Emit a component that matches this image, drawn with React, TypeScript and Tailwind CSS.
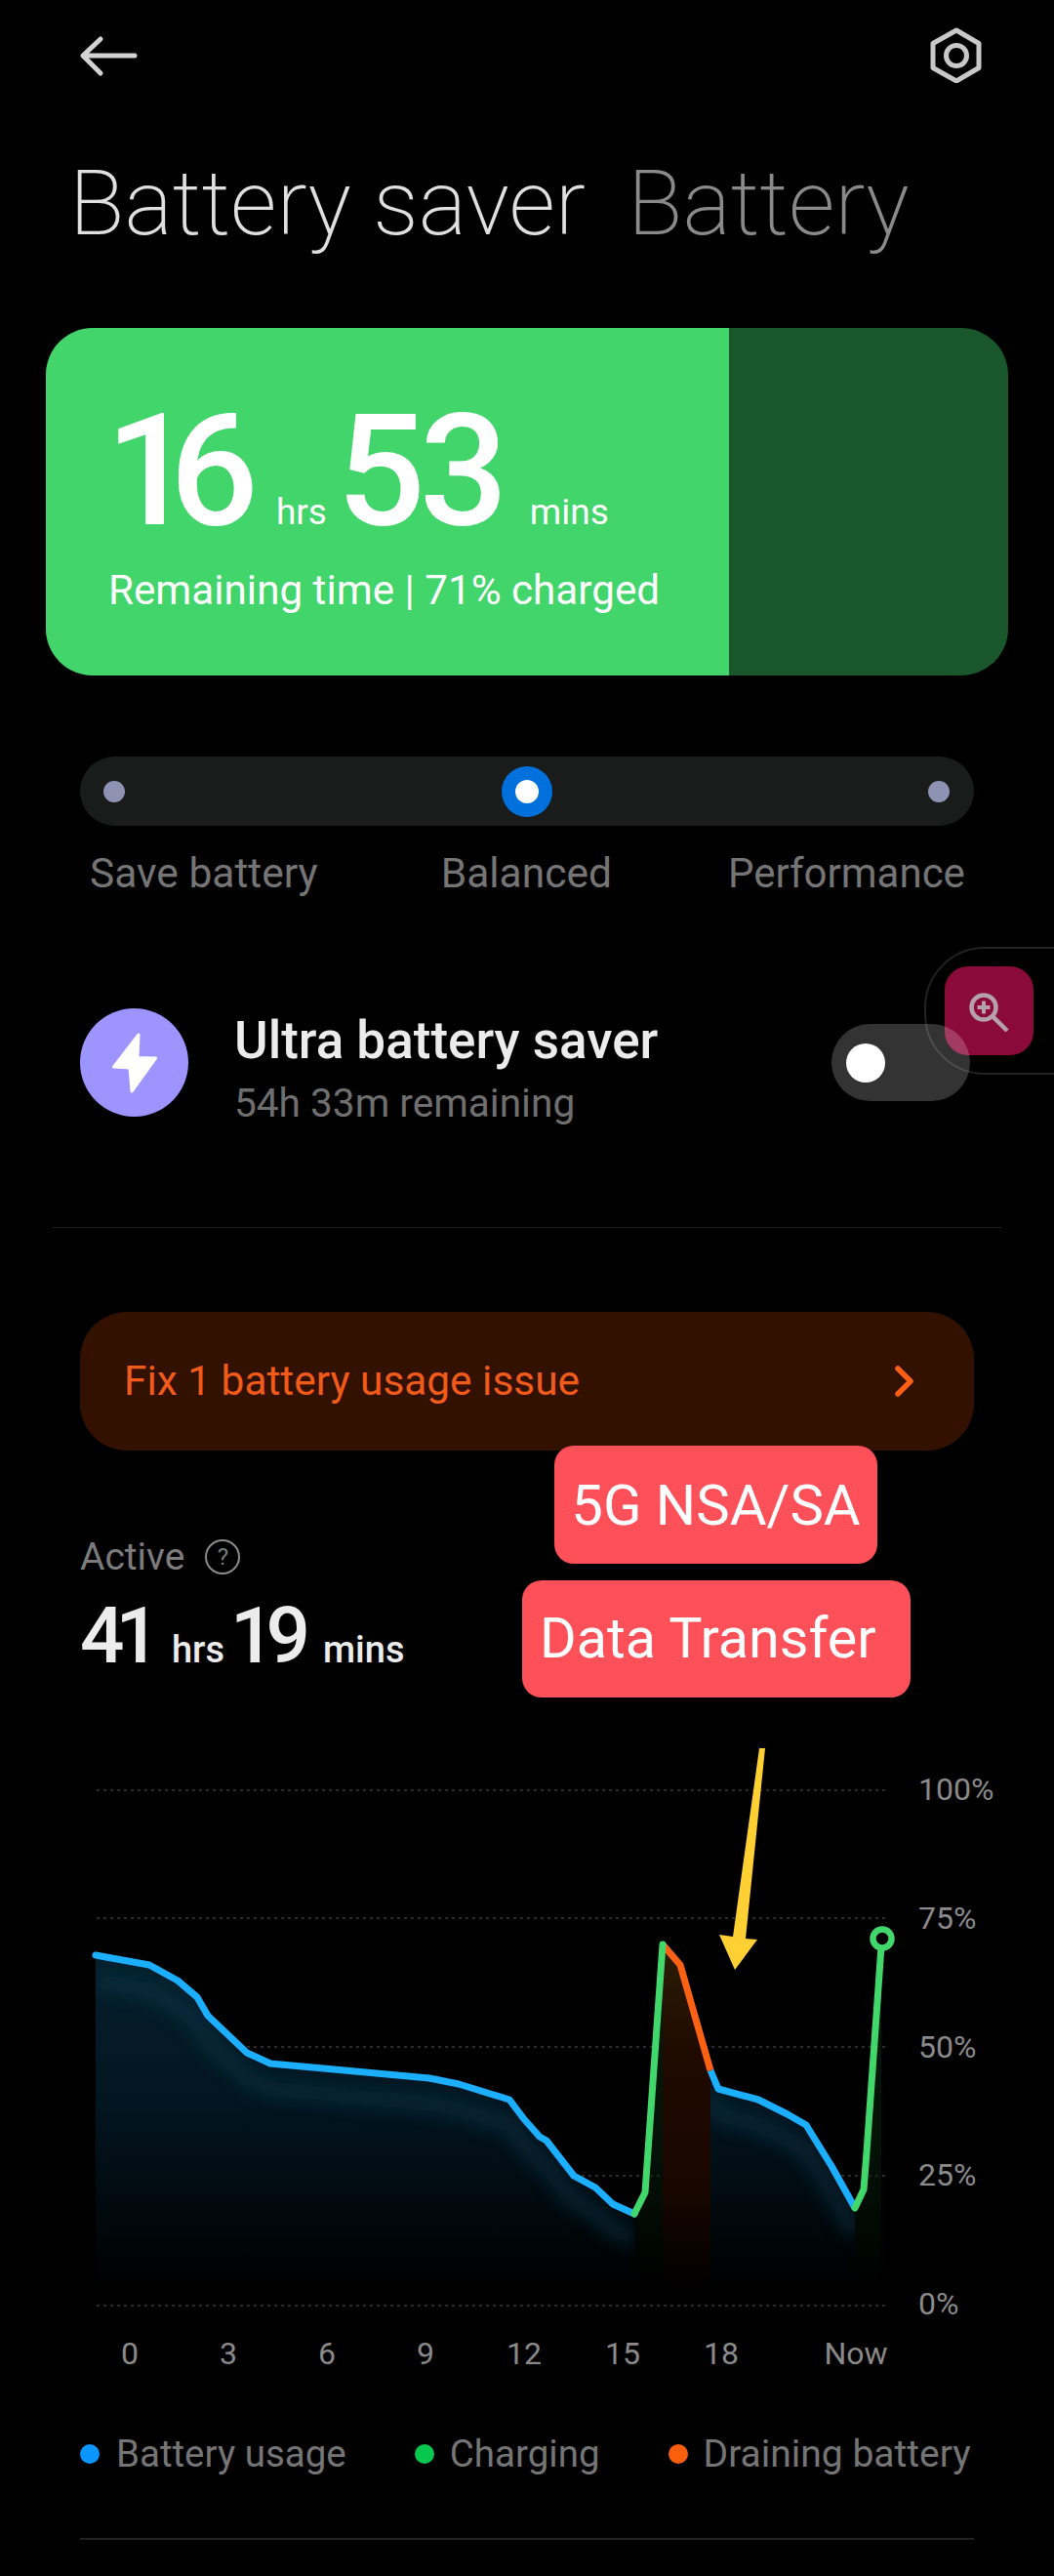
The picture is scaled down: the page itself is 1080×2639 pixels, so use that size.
const blueA = "98,2003 153,2013 182,2029 202,2046 213,2065 233,2084 253,2103 277,2114 440,2129 470,2135 522,2151 537,2171 553,2189 560,2193 588,2229 610,2241 628,2258 650,2268";
const greenA = "650,2268 661,2246 679,1992";
const orange = "679,1992 697,2013 728,2121";
const blueB = "728,2121 736,2140 777,2151 807,2166 826,2177 852,2219 876,2262";
const greenB = "876,2262 885,2243 888,2205 903,1994";

const gridLines = [1834, 1965, 2097, 2229, 2362];
const yLabels = ["100%", "75%", "50%", "25%", "0%"];
const xLabels = ["0", "3", "6", "9", "12", "15", "18"];

function BatteryChart() {
  return (
    <svg width="835" height="590" viewBox="90 1785 835 590" className="shrink-0">
      <defs>
        <linearGradient id="blueFill" gradientUnits="userSpaceOnUse" x1="0" y1="2000" x2="0" y2="2345">
          <stop offset="0" stopColor="#05212e" />
          <stop offset="0.45" stopColor="#031520" />
          <stop offset="1" stopColor="#000000" />
        </linearGradient>
        <linearGradient id="redFill" gradientUnits="userSpaceOnUse" x1="0" y1="2000" x2="0" y2="2345">
          <stop offset="0" stopColor="#2a1c06" />
          <stop offset="0.3" stopColor="#200a00" />
          <stop offset="0.7" stopColor="#180700" />
          <stop offset="1" stopColor="#000000" />
        </linearGradient>
        <linearGradient id="greenFill" gradientUnits="userSpaceOnUse" x1="0" y1="2000" x2="0" y2="2345">
          <stop offset="0" stopColor="#0d3a1a" />
          <stop offset="0.6" stopColor="#08220f" />
          <stop offset="1" stopColor="#000000" />
        </linearGradient>
        <clipPath id="blueClip">
          <polygon points={`${blueA} 650,2345 98,2345`} />
          <polygon points={`${blueB} 876,2345 728,2345`} />
        </clipPath>
        <filter id="glow" x="-10%" y="-50%" width="120%" height="200%">
          <feGaussianBlur stdDeviation="9" />
        </filter>
      </defs>

      {gridLines.map((y) => (
        <line key={y} x1="99" x2="910" y1={y} y2={y} stroke="#3a3a3a" strokeWidth="1.5" strokeDasharray="3 4" />
      ))}

      <polygon points={`${blueA} 650,2345 98,2345`} fill="url(#blueFill)" />
      <polygon points={`${blueB} 876,2345 728,2345`} fill="url(#blueFill)" />
      <polygon points={`${greenA} 679,2345 650,2345`} fill="url(#greenFill)" opacity="0.5" />
      <polygon points={`${orange} 728,2345 679,2345`} fill="url(#redFill)" />
      <polygon points={`${greenB} 903,2345 876,2345`} fill="url(#greenFill)" opacity="0.5" />

      <g clipPath="url(#blueClip)">
        <polyline points={blueA} transform="translate(0 26)" fill="none" stroke="#0a3a50" strokeWidth="16" filter="url(#glow)" opacity="0.55" />
        <polyline points={blueB} transform="translate(0 26)" fill="none" stroke="#0a3a50" strokeWidth="16" filter="url(#glow)" opacity="0.55" />
      </g>

      <polyline points={blueA} fill="none" stroke="#1caeff" strokeWidth="7" strokeLinejoin="round" strokeLinecap="round" />
      <polyline points={blueB} fill="none" stroke="#1caeff" strokeWidth="7" strokeLinejoin="round" />
      <polyline points={orange} fill="none" stroke="#fb6114" strokeWidth="7" strokeLinejoin="round" />
      <polyline points={greenA} fill="none" stroke="#41d76b" strokeWidth="7" strokeLinejoin="round" strokeLinecap="round" />
      <polyline points={greenB} fill="none" stroke="#41d76b" strokeWidth="7" strokeLinejoin="round" strokeLinecap="round" />
      <circle cx="904" cy="1986" r="9.5" fill="#000000" stroke="#41d76b" strokeWidth="6.5" />

      <polygon points="778,1791 784,1791 764,1986 776,1987 753,2018 737,1982 751,1984" fill="#ffd033" />
    </svg>
  );
}

export default function App() {
  return (
    <div className="relative h-[2639px] w-[1080px] overflow-hidden bg-black font-['Roboto',sans-serif]">
      {/* header */}
      <div className="flex items-start justify-between pl-[80px] pr-[72px] pt-[28px]">
        <svg width="64" height="57" viewBox="80 28 64 57" fill="none" stroke="#d2d2d2" strokeWidth="5" strokeLinecap="round" strokeLinejoin="round">
          <path d="M138 57H85M103 40 85 57l18 18" />
        </svg>
        <svg width="56" height="57" viewBox="951 28 56 57" fill="none" stroke="#c8c8c8" strokeWidth="5" strokeLinejoin="round">
          <path d="M979 31 1002 44.5V69.5L979 83 955 69.5V44.5Z" />
          <circle cx="979" cy="57" r="10.5" />
        </svg>
      </div>

      <div className="ml-[71px] mt-[74px] flex h-[100px] text-[93px] font-extralight leading-[100px]">
        <span className="text-[#e0e0e0]">Battery saver</span>
        <span className="ml-[43px] text-[#8a8a8a]">Battery</span>
      </div>

      {/* remaining time card */}
      <div className="mx-[47px] mt-[77px] flex h-[356px] overflow-hidden rounded-[48px] bg-[#1a582c]">
        <div className="h-full w-[700px] bg-[#41d56b] pl-[64px] pt-[67px] text-white">
          <div className="-ml-[3px] flex items-baseline">
            <span className="text-[160px] font-medium leading-[160px] tracking-[-25px]">16</span>
            <span className="ml-[43px] text-[37px] leading-[40px]">hrs</span>
            <span className="ml-[10px] text-[160px] font-medium leading-[160px] tracking-[-6px]">53</span>
            <span className="ml-[28px] text-[37px] leading-[40px]">mins</span>
          </div>
          <p className="mt-[17px] text-[42.2px] leading-[50px]">Remaining time | 71% charged</p>
        </div>
      </div>

      {/* mode slider */}
      <div className="mx-[82px] mt-[83px] flex h-[71px] items-center justify-between rounded-full bg-[#1a1c1c] pl-[24px] pr-[25px]">
        <div className="h-[22px] w-[22px] rounded-full bg-[#8f93b3]" />
        <div className="flex h-[52px] w-[52px] items-center justify-center rounded-full bg-[#0070dc]">
          <div className="h-[24px] w-[24px] rounded-full bg-white" />
        </div>
        <div className="h-[22px] w-[22px] rounded-full bg-[#8f93b3]" />
      </div>
      <div className="mt-[24px] flex pl-[92px] text-[42.5px] leading-[50px] text-[#757575]">
        <span>Save battery</span>
        <span className="ml-[126px]">Balanced</span>
        <span className="ml-[119px] text-[42px]">Performance</span>
      </div>

      {/* ultra saver */}
      <div className="mt-[113px] flex h-[111px] items-center justify-between pl-[82px] pr-[86px]">
        <div className="flex h-[111px] items-center">
          <div className="h-[111px] w-[111px] shrink-0 rounded-full bg-[#9d94ff]">
            <svg width="111" height="111" viewBox="0 0 111 111">
              <path d="M60 27 34.500 60 51 61 53 85 77.500 51 59 50.500Z" fill="#ffffff" stroke="#ffffff" strokeWidth="3" strokeLinejoin="round" />
            </svg>
          </div>
          <div className="ml-[47px] self-start pt-[3px]">
            <p className="text-[53px] font-medium leading-[60px] text-[#ececec]">Ultra battery saver</p>
            <p className="mt-[9px] text-[40.6px] leading-[50px] text-[#6f6f6f]">54h 33m remaining</p>
          </div>
        </div>
        <div className="relative z-10 flex h-[79px] w-[142px] items-center rounded-full bg-white/20 pl-[15px]">
          <div className="h-[40px] w-[40px] rounded-full bg-white" />
        </div>
      </div>

      <div className="mx-[54px] mt-[113px] h-[1px] bg-[#1f1f1f]" />

      {/* issue banner */}
      <div className="mx-[82px] mt-[86px] flex h-[142px] items-center justify-between rounded-[48px] bg-[#331100] pl-[45px] pr-[60px]">
        <span className="text-[42.4px] leading-[50px] text-[#f05a1a]">Fix 1 battery usage issue</span>
        <svg width="22" height="34" viewBox="0 0 22 34" fill="none" stroke="#fa5f14" strokeWidth="5.500" strokeLinecap="round" strokeLinejoin="round">
          <path d="M4 4 17 17 4 30" />
        </svg>
      </div>

      {/* active time */}
      <div className="ml-[82px] mt-[86px] flex h-[46px] items-center text-[39px] leading-[46px] text-[#7c7c7c]">
        <span>Active</span>
        <div className="ml-[21px] flex h-[36px] w-[36px] items-center justify-center rounded-full border-[2.500px] border-[#8a8a8a] text-[24px] leading-none">?</div>
      </div>
      <div className="ml-[82px] mt-[18px] flex h-[80px] items-baseline text-[#ececec]">
        <span className="text-[80px] font-medium leading-[80px] tracking-[-9px]">41</span>
        <span className="ml-[21px] text-[38px] font-medium leading-[40px]">hrs</span>
        <span className="ml-[6px] text-[80px] font-medium leading-[80px] tracking-[-9px]">19</span>
        <span className="ml-[22px] text-[38px] font-medium leading-[40px]">mins</span>
      </div>

      {/* chart */}
      <div className="mt-[69px] flex h-[590px] pl-[90px]">
        <BatteryChart />
        <div className="ml-[16px] mt-[30px] flex h-[563px] flex-col justify-between text-[32px] leading-[36px] text-[#8a8a8a]">
          {yLabels.map((label) => (
            <span key={label} className="h-[36px]">{label}</span>
          ))}
        </div>
      </div>
      <div className="ml-[82.500px] mt-[16px] flex text-[32px] leading-[40px] text-[#8a8a8a]">
        {xLabels.map((label) => (
          <span key={label} className="w-[101px] text-center">{label}</span>
        ))}
        <span className="ml-[55px]">Now</span>
      </div>

      {/* legend */}
      <div className="mt-[58px] flex items-center pl-[82px] text-[38.5px] leading-[50px] text-[#757575]">
        <div className="h-[20px] w-[20px] rounded-full bg-[#0a96ff]" />
        <span className="ml-[17px]">Battery usage</span>
        <div className="ml-[70px] h-[20px] w-[20px] rounded-full bg-[#07c84f]" />
        <span className="ml-[16px]">Charging</span>
        <div className="ml-[70px] h-[20px] w-[20px] rounded-full bg-[#fb5f0e]" />
        <span className="ml-[16px] text-[39px]">Draining battery</span>
      </div>
      <div className="mx-[82px] mt-[61px] h-[2px] bg-[#222222]" />

      {/* screen magnifier bubble */}
      <div className="absolute left-[947px] top-[970px] flex h-[131px] w-[140px] items-center rounded-l-[62px] border-2 border-[#222222] pl-[19px]">
        <div className="flex h-[91px] w-[91px] items-center justify-center rounded-[24px] bg-[#8a0a3a]">
          <svg width="91" height="91" viewBox="0 0 91 91" fill="none" stroke="#b6a0ac" strokeLinecap="butt">
            <circle cx="40" cy="42" r="12.500" strokeWidth="4.500" />
            <path d="M49.500 51.500 64 66" strokeWidth="4.500" />
            <path d="M40 35.500V48.500M33.500 42H46.500" strokeWidth="4" />
          </svg>
        </div>
      </div>

      {/* annotation labels */}
      <div className="absolute left-[568px] top-[1481px] flex h-[121px] w-[331px] items-center justify-center rounded-[20px] bg-[#fe5059] text-[58px] leading-[70px] text-white">
        5G NSA/SA
      </div>
      <div className="absolute left-[535px] top-[1619px] flex h-[120px] w-[398px] items-center rounded-[20px] bg-[#fe5059] pl-[18px] text-[57.500px] leading-[70px] text-white">
        Data Transfer
      </div>
    </div>
  );
}
